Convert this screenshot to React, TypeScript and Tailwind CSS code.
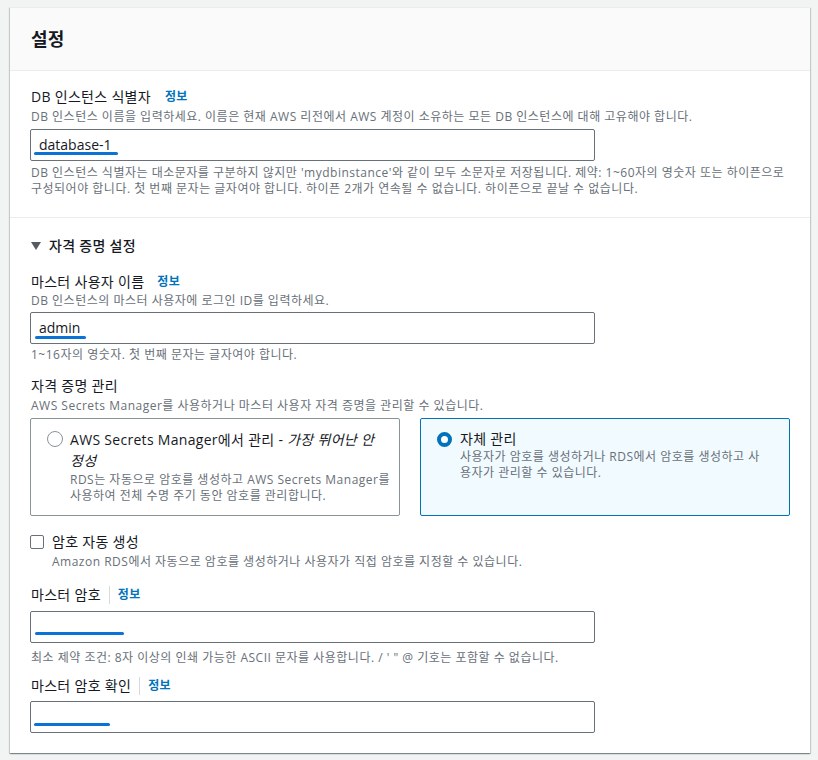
import React from "react";

const font = { fontFamily: '"Open Sans", "Noto Sans CJK KR", sans-serif' };

function Scribble({ className }: { className: string }) {
  return <span className={`absolute h-[3px] rounded-full bg-[#0b72d6] ${className}`} />;
}

function Info() {
  return <span className="text-[12px] font-bold text-[#0073bb] tracking-[0.3px]">정보</span>;
}

export default function App() {
  return (
    <div className="min-h-[760px] bg-[#f2f3f3] pt-[7px] text-[#16191f]" style={font}>
      <div className="ml-[10px] w-[800px] bg-white border-t border-[#eaeded] shadow-[0_1px_1px_0_rgba(0,28,36,0.3),1px_1px_1px_0_rgba(0,28,36,0.15),-1px_1px_1px_0_rgba(0,28,36,0.15)]">
        {/* header */}
        <div className="h-[63px] bg-[#fafafa] border-b border-[#eaeded] px-[21px] flex items-center">
          <h2 className="text-[18px] font-bold leading-[22px] tracking-[0.3px]">설정</h2>
        </div>

        {/* section 1 */}
        <div className="px-[20px] pt-[16px] pb-[20px] border-b border-[#eaeded]">
          <div className="text-[14px] leading-[20px] pl-[1px] flex items-center gap-[14px] tracking-[0.3px]">
            <span>DB 인스턴스 식별자</span>
            <Info />
          </div>
          <div className="text-[12px] leading-[16px] text-[#687078] mt-[2px] pl-[1px] tracking-[0.5px]">
            DB 인스턴스 이름을 입력하세요. 이름은 현재 AWS 리전에서 AWS 계정이 소유하는 모든 DB 인스턴스에 대해 고유해야 합니다.
          </div>
          <div className="relative mt-[4px] w-[565px] h-[32px] border border-[#687078] rounded-[2px] px-[8px] flex items-center text-[14px]">
            <span className="-mt-[2px]">database-1</span>
            <Scribble className="left-[3px] top-[22px] w-[84px]" />
          </div>
          <div className="text-[12px] leading-[16px] text-[#687078] mt-[4px] pl-[1px] tracking-[0.5px] whitespace-nowrap">
            DB 인스턴스 식별자는 대소문자를 구분하지 않지만 'mydbinstance'와 같이 모두 소문자로 저장됩니다. 제약: 1~60자의 영숫자 또는 하이픈으로
            <br />
            구성되어야 합니다. 첫 번째 문자는 글자여야 합니다. 하이픈 2개가 연속될 수 없습니다. 하이픈으로 끝날 수 없습니다.
          </div>
        </div>

        {/* section 2 */}
        <div className="px-[20px] pt-[17px] pb-[20px]">
          <div className="flex items-center gap-[8px] text-[14px] leading-[22px] pl-[1px] tracking-[0.3px]">
            <svg width="10" height="8" viewBox="0 0 10 8">
              <path d="M0 0 L10 0 L5 8 Z" fill="#545b64" />
            </svg>
            <span className="font-medium text-[#16191f]">자격 증명 설정</span>
          </div>

          <div className="mt-[15px] text-[14px] leading-[20px] pl-[1px] flex items-center gap-[13px] tracking-[0.3px]">
            <span>마스터 사용자 이름</span>
            <Info />
          </div>
          <div className="text-[12px] leading-[16px] text-[#687078] mt-[1px] pl-[1px] tracking-[0.5px]">
            DB 인스턴스의 마스터 사용자에 로그인 ID를 입력하세요.
          </div>
          <div className="relative mt-[3px] w-[565px] h-[32px] border border-[#687078] rounded-[2px] px-[8px] flex items-center text-[14px]">
            <span className="-mt-[2px]">admin</span>
            <Scribble className="left-[4px] top-[23px] w-[51px]" />
          </div>
          <div className="text-[12px] leading-[16px] text-[#687078] mt-[3px] pl-[1px] tracking-[0.5px]">
            1~16자의 영숫자. 첫 번째 문자는 글자여야 합니다.
          </div>

          <div className="mt-[13px] text-[14px] leading-[20px] pl-[1px] tracking-[0.3px]">자격 증명 관리</div>
          <div className="text-[12px] leading-[16px] text-[#687078] mt-[2px] pl-[1px] tracking-[0.5px]">
            AWS Secrets Manager를 사용하거나 마스터 사용자 자격 증명을 관리할 수 있습니다.
          </div>

          <div className="mt-[4px] grid grid-cols-2 gap-[20px]">
            <div className="h-[98px] border border-[#879596] rounded-[2px] pl-[16px] pr-[10px] pt-[10px] flex gap-[7px]">
              <span className="mt-[2px] w-[16px] h-[16px] shrink-0 rounded-full border-[1.5px] border-[#879596] bg-white" />
              <div className="whitespace-nowrap">
                <div className="text-[14px] leading-[21px] tracking-[0.3px]">
                  AWS Secrets Manager에서 관리 - <i>가장 뛰어난 안</i>
                  <br />
                  <i>정성</i>
                </div>
                <div className="text-[12px] leading-[16px] text-[#687078] mt-[1px] tracking-[0.5px]">
                  RDS는 자동으로 암호를 생성하고 AWS Secrets Manager를
                  <br />
                  사용하여 전체 수명 주기 동안 암호를 관리합니다.
                </div>
              </div>
            </div>
            <div className="h-[98px] border border-[#0073bb] bg-[#f1faff] rounded-[2px] pl-[16px] pr-[10px] pt-[10px] flex gap-[8px]">
              <span className="mt-[3px] w-[15px] h-[15px] shrink-0 rounded-full border-[4.5px] border-[#0073bb] bg-white" />
              <div className="whitespace-nowrap">
                <div className="text-[14px] leading-[20px] tracking-[0.3px]">자체 관리</div>
                <div className="text-[12px] leading-[16px] text-[#687078] tracking-[0.5px]">
                  사용자가 암호를 생성하거나 RDS에서 암호를 생성하고 사
                  <br />
                  용자가 관리할 수 있습니다.
                </div>
              </div>
            </div>
          </div>

          <div className="mt-[16px] flex gap-[8px]">
            <span className="mt-[3px] w-[14px] h-[14px] shrink-0 border border-[#687078] rounded-[2px] bg-white" />
            <div>
              <div className="text-[14px] leading-[20px] tracking-[0.3px]">암호 자동 생성</div>
              <div className="text-[12px] leading-[16px] text-[#687078] mt-[2px] tracking-[0.5px]">
                Amazon RDS에서 자동으로 암호를 생성하거나 사용자가 직접 암호를 지정할 수 있습니다.
              </div>
            </div>
          </div>

          <div className="mt-[15px] text-[14px] leading-[20px] pl-[1px] flex items-center tracking-[0.3px]">
            <span>마스터 암호</span>
            <span className="mx-[8px] w-px h-[18px] bg-[#d5dbdb]" />
            <Info />
          </div>
          <div className="relative mt-[6px] w-[565px] h-[32px] border border-[#687078] rounded-[2px]">
            <Scribble className="left-[4px] top-[20px] w-[89px]" />
          </div>
          <div className="text-[12px] leading-[16px] text-[#687078] mt-[7px] pl-[1px] tracking-[0.5px]">
            최소 제약 조건: 8자 이상의 인쇄 가능한 ASCII 문자를 사용합니다. / ' " @ 기호는 포함할 수 없습니다.
          </div>

          <div className="mt-[10px] text-[14px] leading-[20px] pl-[1px] flex items-center tracking-[0.3px]">
            <span>마스터 암호 확인</span>
            <span className="mx-[8px] w-px h-[18px] bg-[#d5dbdb]" />
            <Info />
          </div>
          <div className="relative mt-[5px] w-[565px] h-[32px] border border-[#687078] rounded-[2px]">
            <Scribble className="left-[3px] top-[21px] w-[76px]" />
          </div>
        </div>
      </div>
    </div>
  );
}
